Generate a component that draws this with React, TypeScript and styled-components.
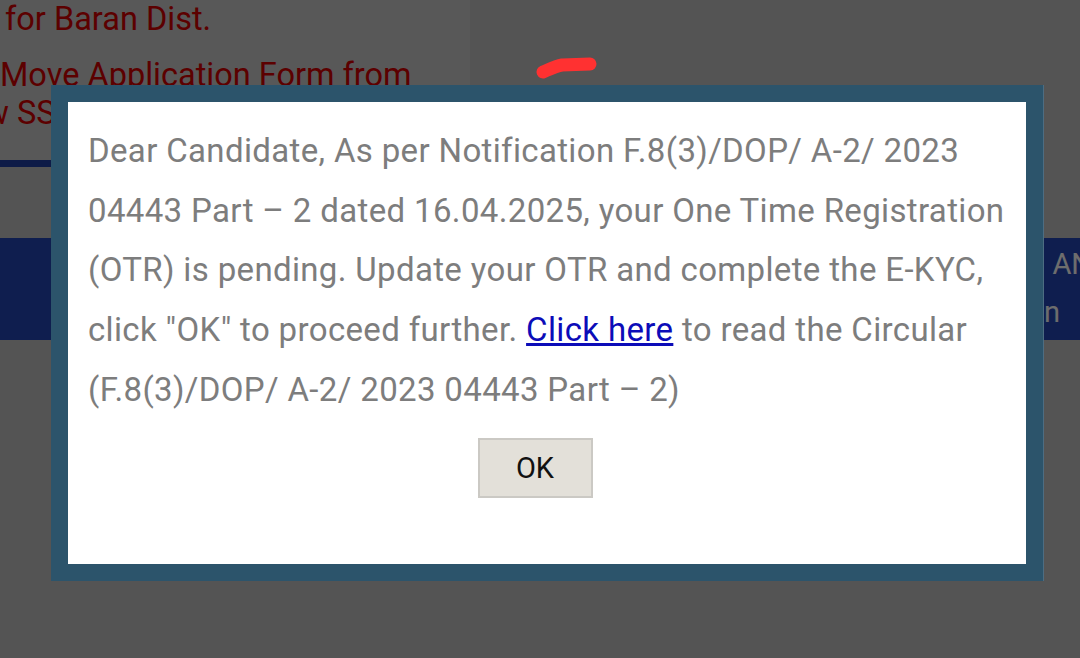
import React from 'react';
import styled, { createGlobalStyle } from 'styled-components';

const GlobalStyle = createGlobalStyle`
    html, body {
        margin: 0;
        padding: 0;
        width: 1080px;
        height: 658px;
        overflow: hidden;
        font-family: Roboto, "Liberation Sans", sans-serif;
    }
`;

const Page = styled.div`
    position: relative;
    width: 1080px;
    height: 658px;
    overflow: hidden;
    background-color: #bbbbbb;
    display: flex;
    flex-direction: column;
`;

const TopRow = styled.div`
    display: flex;
    height: 167px;
`;

const NoticePanel = styled.div`
    width: 470px;
    background-color: #c3c3c3;
    display: flex;
    flex-direction: column;
    overflow: hidden;
    border-bottom: 7px solid #1f3d9e;
    box-sizing: border-box;
`;

const NoticeItem = styled.div`
    color: #cc0000;
    font-size: 32.5px;
    line-height: 38px;
    white-space: nowrap;
    margin-bottom: 18px;
`;

const NoticeLine = styled.div<{ $shift: number }>`
    margin-left: ${(p) => p.$shift}px;
`;

const Gap = styled.div`
    height: 71px;
`;

const Band = styled.div`
    height: 102px;
    background-color: #2244b0;
    display: flex;
    flex-direction: column;
    align-items: flex-end;
    padding-top: 2px;
    box-sizing: border-box;
    color: #f2f2f2;
    font-size: 29px;
    line-height: 48px;
    white-space: nowrap;
    overflow: hidden;
`;

const BandLine = styled.div<{ $shift: number }>`
    margin-right: ${(p) => p.$shift}px;
`;

const Overlay = styled.div`
    position: absolute;
    inset: 0;
    background-color: rgba(0, 0, 0, 0.55);
`;

const Dialog = styled.div`
    position: absolute;
    left: 51px;
    top: 85px;
    width: 992px;
    height: 496px;
    box-sizing: border-box;
    border: 17px solid #2c546b;
    box-shadow: 1px 0 0 #4d6d82;
    background-color: #ffffff;
    padding: 19px 16px 0 20px;
    display: flex;
    flex-direction: column;
`;

const Message = styled.p`
    margin: 0;
    color: #7d7d7d;
    font-size: 33px;
    letter-spacing: 0.35px;
    line-height: 59.7px;
`;

const CircularLink = styled.a`
    color: #0c0cb8;
    text-decoration: underline;
    cursor: pointer;
`;

const Actions = styled.div`
    display: flex;
    justify-content: center;
    margin-top: 18px;
    padding-right: 28px;
`;

const OkButton = styled.button`
    width: 115px;
    height: 60px;
    background-color: #e3e0d9;
    border: 2px solid #cbc9c4;
    color: #111111;
    font-family: Roboto, "Liberation Sans", sans-serif;
    font-size: 29px;
    cursor: pointer;
`;

const Scribble = styled.svg`
    position: absolute;
    left: 530px;
    top: 50px;
`;

const App: React.FC = () => {
    return (
        <>
            <GlobalStyle />
            <Page>
                <TopRow>
                    <NoticePanel>
                        <NoticeItem>
                            <NoticeLine $shift={5}>for Baran Dist.</NoticeLine>
                        </NoticeItem>
                        <NoticeItem>
                            <NoticeLine $shift={0}>Move Application Form from</NoticeLine>
                            <NoticeLine $shift={-56}>New SSO ID to Old SSO ID</NoticeLine>
                        </NoticeItem>
                    </NoticePanel>
                </TopRow>
                <Gap />
                <Band>
                    <BandLine $shift={-12}>AN</BandLine>
                    <BandLine $shift={20}>on</BandLine>
                </Band>

                <Overlay />

                <Scribble width="80" height="40" viewBox="0 0 80 40">
                    <path
                        d="M13 22 C 20 19, 26 16, 32 15 L 60 14"
                        fill="none"
                        stroke="#ff3131"
                        strokeWidth="13"
                        strokeLinecap="round"
                        strokeLinejoin="round"
                    />
                </Scribble>

                <Dialog>
                    <Message>
                        Dear Candidate, As per Notification F.8(3)/DOP/ A-2/ 2023 04443 Part – 2
                        dated 16.04.2025, your One Time Registration (OTR) is pending. Update your
                        OTR and complete the E-KYC, click "OK" to proceed further.{' '}
                        <CircularLink>Click here</CircularLink> to read the Circular
                        (F.8(3)/DOP/ A-2/ 2023 04443 Part – 2)
                    </Message>
                    <Actions>
                        <OkButton>OK</OkButton>
                    </Actions>
                </Dialog>
            </Page>
        </>
    );
};

export default App;
